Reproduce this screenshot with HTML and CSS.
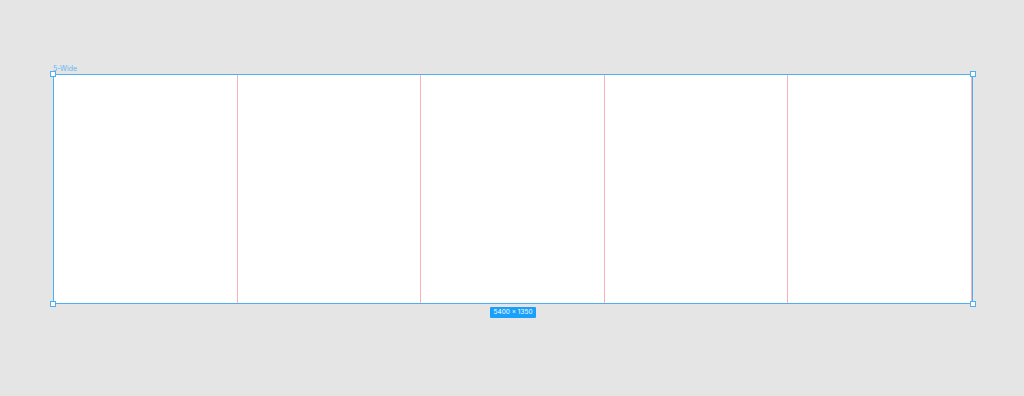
FILE: index.html
```html
<!DOCTYPE html>
<html>
<head>
  <meta charset="utf-8">
  <title>5-Wide</title>
  <link rel="stylesheet" href="styles.css">
</head>
<body>
  <div class="canvas">
    <div class="frame-wrap">
      <div class="frame-label">5-Wide</div>
      <div class="frame">
        <div class="col"></div>
        <div class="col"></div>
        <div class="col"></div>
        <div class="col"></div>
        <div class="col"></div>
        <span class="handle tl"></span>
        <span class="handle tr"></span>
        <span class="handle bl"></span>
        <span class="handle br"></span>
      </div>
      <div class="size-row">
        <span class="size-badge">5400 × 1350</span>
      </div>
    </div>
  </div>
</body>
</html>
```

FILE: styles.css
```css
body {
  margin: 0;
  background: #e5e5e5;
  font-family: Inter, "Liberation Sans", sans-serif;
}

.canvas {
  width: 1024px;
  height: 396px;
  padding: 65px 0 0 53px;
  box-sizing: border-box;
}

.frame-wrap {
  width: 920px;
  display: flex;
  flex-direction: column;
}

.frame-label {
  font-size: 7px;
  line-height: 8px;
  color: #5fb8f6;
  height: 9px;
}

.frame {
  position: relative;
  height: 228px;
  background: #fff;
  border: 1px solid #4db0f5;
  display: flex;
}

.col {
  flex: 1;
  border-right: 1px solid #f8b4b4;
}

.col:last-child {
  border-right: none;
}

.handle {
  position: absolute;
  width: 4px;
  height: 4px;
  background: #fff;
  border: 1px solid #4db0f5;
}

.tl { left: -4px; top: -4px; }
.tr { right: -4px; top: -4px; }
.bl { left: -4px; bottom: -4px; }
.br { right: -4px; bottom: -4px; }

.size-row {
  display: flex;
  justify-content: center;
  padding-top: 3px;
}

.size-badge {
  background: #18a0fb;
  color: #fff;
  font-size: 6.5px;
  line-height: 11px;
  padding: 0 3px;
  border-radius: 1px;
}
```
